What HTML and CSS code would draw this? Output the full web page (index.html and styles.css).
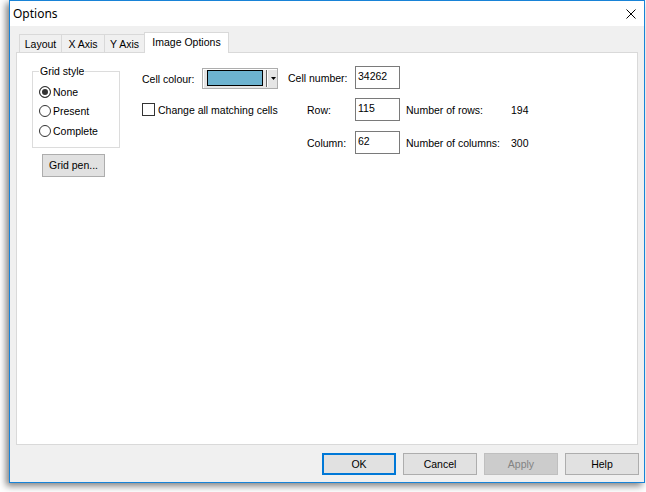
FILE: index.html
```html
<!DOCTYPE html>
<html>
<head>
<meta charset="utf-8">
<title>Options</title>
<link rel="stylesheet" href="styles.css">
</head>
<body>
<div class="window">
  <div class="titlebar">
    <span class="title">Options</span>
    <svg class="close" width="10" height="10" viewBox="0 0 10 10"><path d="M0.5 0.5 L9.5 9.5 M9.5 0.5 L0.5 9.5" stroke="#000" stroke-width="1" fill="none"/></svg>
  </div>
  <div class="client">
    <div class="tabs">
      <div class="tab tab-layout">Layout</div>
      <div class="tab tab-x">X Axis</div>
      <div class="tab tab-y">Y Axis</div>
      <div class="tab tab-img selected">Image Options</div>
    </div>
    <div class="panel">
      <div class="col1">
        <fieldset class="group">
          <legend>Grid style</legend>
          <div class="radio-row"><span class="radio checked"></span>None</div>
          <div class="radio-row"><span class="radio"></span>Present</div>
          <div class="radio-row"><span class="radio"></span>Complete</div>
        </fieldset>
        <div class="btn gridpen">Grid pen...</div>
      </div>
      <div class="col2">
        <div class="colour-row">
          <span class="colour-label">Cell colour:</span>
          <div class="combo">
            <span class="swatch"></span>
            <span class="divider"></span>
            <svg class="arrow" width="5" height="3" viewBox="0 0 5 3"><polygon points="0,0 5,0 2.5,3" fill="#000"/></svg>
          </div>
        </div>
        <div class="check-row"><span class="checkbox"></span><span class="check-label">Change all matching cells</span></div>
      </div>
      <div class="col3">
        <div class="field-row">
          <span class="field-label">Cell number:</span>
          <div class="edit">34262</div>
        </div>
        <div class="field-row row2">
          <span class="field-label indent">Row:</span>
          <div class="edit">115</div>
          <span class="info-label">Number of rows:</span>
          <span class="info-value">194</span>
        </div>
        <div class="field-row row3">
          <span class="field-label indent">Column:</span>
          <div class="edit">62</div>
          <span class="info-label">Number of columns:</span>
          <span class="info-value">300</span>
        </div>
      </div>
    </div>
    <div class="buttons">
      <div class="btn dlg default">OK</div>
      <div class="btn dlg">Cancel</div>
      <div class="btn dlg disabled">Apply</div>
      <div class="btn dlg">Help</div>
    </div>
  </div>
</div>
</body>
</html>
```
FILE: styles.css
```css
* { box-sizing: border-box; }
html, body { margin: 0; padding: 0; background: #fff; }
body {
  width: 646px;
  height: 492px;
  overflow: hidden;
  font-family: "Liberation Sans", Arial, sans-serif;
  font-size: 10.5px;
  color: #000;
}
.window {
  margin-left: 9px;
  width: 636px;
  height: 483px;
  border: 1px solid #1883d7;
  background: #f0f0f0;
  box-shadow: -3px 3px 7px rgba(0, 0, 0, 0.5);
  display: flex;
  flex-direction: column;
}
.titlebar {
  height: 25px;
  flex: none;
  background: #fff;
  display: flex;
  align-items: center;
  justify-content: space-between;
  padding-left: 3px;
  padding-right: 8px;
}
.title {
  font-family: "Noto Sans", "Liberation Sans", sans-serif;
  font-size: 12px;
  line-height: 16px;
}
.close { display: block; }
.client {
  flex: 1;
  padding: 6px 6px 0 6px;
  display: flex;
  flex-direction: column;
}
.tabs {
  display: flex;
  align-items: flex-end;
  height: 20px;
  padding-left: 3px;
  position: relative;
  z-index: 1;
}
.tab {
  height: 18px;
  border: 1px solid #d9d9d9;
  border-bottom: none;
  background: #f0f0f0;
  margin-right: -1px;
  text-align: center;
  line-height: 13px;
  padding-top: 3px;
  white-space: nowrap;
}
.tab-layout { width: 43px; }
.tab-x { width: 44px; }
.tab-y { width: 41px; }
.tab-img { width: 85px; }
.tab.selected {
  height: 21px;
  background: #fff;
  margin-bottom: -1px;
  padding-top: 3px;
}
.panel {
  height: 393px;
  flex: none;
  border: 1px solid #d9d9d9;
  background: #fff;
  display: flex;
  align-items: flex-start;
}
.col1 {
  margin-left: 15px;
  margin-top: 12px;
  width: 88px;
  flex: none;
}
.group {
  margin: 0;
  width: 88px;
  min-width: 0;
  border: 1px solid #dcdcdc;
  padding: 4px 0 6px 6px;
}
.group legend {
  padding: 0 1px;
  line-height: 13px;
}
.radio-row {
  display: flex;
  align-items: center;
  height: 19.5px;
  white-space: nowrap;
}
.radio {
  width: 12px;
  height: 12px;
  border: 1px solid #333;
  border-radius: 50%;
  background: #fff;
  margin-right: 2px;
  flex: none;
}
.radio.checked {
  background: #333;
  box-shadow: inset 0 0 0 2px #fff;
}
.btn {
  background: #e1e1e1;
  border: 1px solid #adadad;
  display: flex;
  align-items: center;
  justify-content: center;
  white-space: nowrap;
}
.gridpen {
  margin-left: 10px;
  margin-top: 6px;
  width: 63px;
  height: 23px;
}
.col2 {
  margin-left: 22px;
  margin-top: 15px;
  width: 136px;
  flex: none;
}
.colour-row {
  display: flex;
  align-items: center;
  height: 21px;
}
.colour-label { width: 60px; flex: none; }
.combo {
  width: 76px;
  height: 21px;
  border: 1px solid #adadad;
  background: #e5e5e5;
  box-shadow: inset 1px 1px 0 #fff;
  display: flex;
  align-items: flex-start;
  padding-top: 1px;
  flex: none;
}
.swatch {
  margin-left: 4px;
  width: 56px;
  height: 16px;
  border: 1px solid #000;
  background: #6db3d0;
  flex: none;
}
.divider {
  margin-left: 3px;
  width: 2px;
  height: 17px;
  border-left: 1px solid #666;
  border-right: 1px solid #fff;
  flex: none;
}
.arrow {
  margin-left: 3px;
  margin-top: 7px;
  display: block;
  flex: none;
}
.check-row {
  margin-top: 14px;
  display: flex;
  align-items: center;
  height: 13px;
  white-space: nowrap;
}
.checkbox {
  width: 13px;
  height: 13px;
  border: 1px solid #333;
  background: #fff;
  flex: none;
}
.check-label { margin-left: 3px; }
.col3 {
  margin-left: 10px;
  margin-top: 13px;
  flex: none;
}
.field-row {
  display: flex;
  align-items: center;
  height: 23px;
  white-space: nowrap;
}
.row2 { margin-top: 9px; }
.row3 { margin-top: 10px; }
.field-label { width: 67px; flex: none; }
.field-label.indent { padding-left: 19px; }
.edit {
  width: 45px;
  height: 23px;
  border: 1px solid #7a7a7a;
  background: #fff;
  padding: 3px 0 0 2px;
  line-height: 13px;
  flex: none;
}
.info-label { margin-left: 6px; width: 105px; flex: none; }
.buttons {
  display: flex;
  justify-content: flex-end;
  gap: 7px;
  margin-top: 8px;
  margin-right: -1px;
}
.dlg {
  width: 74px;
  height: 22px;
}
.dlg.default { border: 2px solid #0078d7; }
.dlg.disabled {
  background: #cccccc;
  border-color: #bfbfbf;
  color: #838383;
}
```
